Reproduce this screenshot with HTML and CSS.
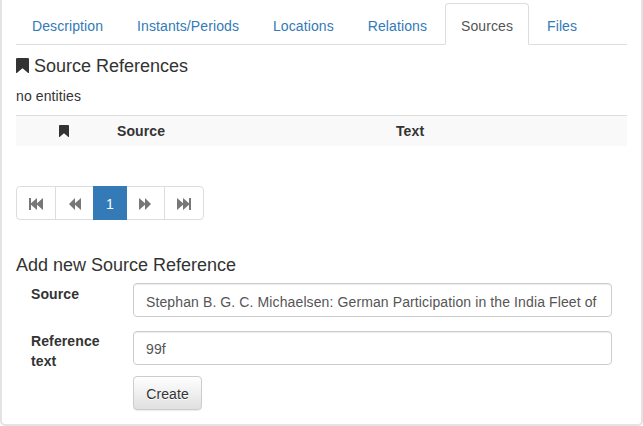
FILE: index.html
```html
<!DOCTYPE html>
<html lang="en">
<head>
<meta charset="utf-8">
<title>Source References</title>
<link rel="stylesheet" href="styles.css">
</head>
<body>
<svg class="sprite" aria-hidden="true">
  <symbol id="bookmark" viewBox="0 0 13 15" preserveAspectRatio="none"><path d="M0 1.2Q0 0 1.2 0H11.8Q13 0 13 1.2V15H12.2L6.5 10.3L.8 15H0Z"/></symbol>
  <symbol id="back" viewBox="0 0 12 12"><path d="M0 6L6 0V5.3L12 0V12L6 6.7V12Z"/></symbol>
  <symbol id="first" viewBox="0 0 14 12"><path d="M0 0H2V5.3L8 0V5.3L14 0V12L8 6.7V12L2 6.7V12H0Z"/></symbol>
</svg>
<main class="panel">
  <nav class="tabs">
    <a class="tab">Description</a>
    <a class="tab">Instants/Periods</a>
    <a class="tab">Locations</a>
    <a class="tab">Relations</a>
    <a class="tab active">Sources</a>
    <a class="tab">Files</a>
  </nav>
  <h4 class="title"><svg class="title-icon"><use href="#bookmark"/></svg>Source References</h4>
  <p class="empty">no entities</p>
  <div class="table-head">
    <span class="col-icon"><svg class="small-icon"><use href="#bookmark"/></svg></span>
    <span>Source</span>
    <span>Text</span>
  </div>
  <div class="pagination">
    <a class="page edge"><svg class="first"><use href="#first"/></svg></a>
    <a class="page"><svg class="back"><use href="#back"/></svg></a>
    <a class="page current">1</a>
    <a class="page"><svg class="back flip"><use href="#back"/></svg></a>
    <a class="page edge"><svg class="first flip"><use href="#first"/></svg></a>
  </div>
  <h4 class="title form-title">Add new Source Reference</h4>
  <form class="form">
    <label class="label" for="source">Source</label>
    <input class="field source" id="source" value="Stephan B. G. C. Michaelsen: German Participation in the India Fleet of">
    <label class="label second" for="text">Reference text</label>
    <input class="field" id="text" value="99f">
    <button class="create" type="button">Create</button>
  </form>
</main>
</body>
</html>
```
FILE: styles.css
```css
* { box-sizing: border-box; }
body {
  margin: 0;
  background: #fff;
  color: #333;
  font: 14px/20px "Liberation Sans", Arial, sans-serif;
  letter-spacing: .11px;
}
.sprite { display: none; }
svg { fill: currentColor; display: block; }
.panel {
  height: 426px;
  padding: 3px 14px 0;
  border: 2px solid #e3e3e3;
  border-top: 0;
  border-radius: 0 0 5px 5px;
  overflow: hidden;
}
.tabs {
  display: flex;
  height: 42px;
  border-bottom: 1px solid #ddd;
  letter-spacing: .095px;
}
.tab {
  height: 42px;
  margin-right: 2px;
  padding: 10px 15px;
  border: 1px solid transparent;
  border-radius: 4px 4px 0 0;
  color: #337ab7;
  line-height: 24px;
  white-space: nowrap;
}
.tab.active {
  border-color: #ddd #ddd #fff;
  background: #fff;
  color: #555;
}
.title {
  display: flex;
  align-items: center;
  margin: 11px 0 10px;
  font-size: 18px;
  font-weight: 400;
  line-height: 20px;
  letter-spacing: 0;
}
.title-icon { width: 13px; height: 15px; margin: -1px 5px 0 0; }
.empty { margin: 10px 0 9px; }
.table-head {
  display: grid;
  grid-template-columns: 101px 279px 1fr;
  align-items: center;
  height: 31px;
  border-top: 1px solid #ddd;
  background: #f9f9f9;
  font-weight: 700;
}
.col-icon { padding-left: 43px; }
.small-icon { width: 10px; height: 12px; }
.pagination { display: flex; margin-top: 40px; width: 188px; height: 34px; }
.page {
  display: flex;
  align-items: center;
  justify-content: center;
  width: 39px;
  margin-left: -1px;
  padding-top: 2px;
  border: 1px solid #ddd;
  color: #777;
}
.page.edge { width: 40px; }
.page:first-child { margin-left: 0; border-radius: 4px 0 0 4px; }
.page:last-child { border-radius: 0 4px 4px 0; }
.page.current {
  z-index: 1;
  width: 34px;
  border-color: #337ab7;
  background: #337ab7;
  color: #fff;
}
.first { width: 14px; height: 12px; }
.back { width: 12px; height: 12px; }
.flip { transform: scaleX(-1); }
.page .back.flip { margin-right: 2px; }
.form-title { margin: 35px 0 8px; }
.form {
  display: grid;
  grid-template-columns: 102px 479px;
  row-gap: 14px;
  padding-left: 15px;
}
.label { height: 34px; width: 85px; font-weight: 700; padding-top: 1px; }
.label.second { padding-top: 0; }
.field {
  width: 479px;
  height: 34px;
  padding: 7px 12px 5px;
  border: 1px solid #ccc;
  border-radius: 4px;
  background: #fff;
  box-shadow: inset 0 1px 1px rgba(0, 0, 0, .075);
  color: #555;
  font: inherit;
  letter-spacing: inherit;
}
.source { padding-top: 8px; padding-bottom: 4px; }
.create {
  grid-column: 2;
  width: 69px;
  height: 34px;
  margin-top: -3px;
  padding: 2px 0 0;
  border: 1px solid #ccc;
  border-radius: 4px;
  background: linear-gradient(#fff, #e0e0e0);
  box-shadow: inset 0 1px 0 rgba(255, 255, 255, .15), 0 1px 1px rgba(0, 0, 0, .075);
  color: #333;
  font: inherit;
  letter-spacing: inherit;
  text-shadow: 0 1px 0 #fff;
}
```
